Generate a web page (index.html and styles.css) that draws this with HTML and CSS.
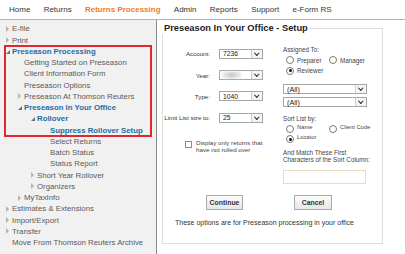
FILE: index.html
```html
<!DOCTYPE html>
<html lang="en">
<head>
    <meta charset="UTF-8">
    <title>Preseason In Your Office - Setup</title>
    <link rel="stylesheet" href="styles.css">
</head>
<body>
    <div class="topnav">
        <a>Home</a>
        <a>Returns</a>
        <a class="active">Returns Processing</a>
        <a>Admin</a>
        <a>Reports</a>
        <a>Support</a>
        <a>e-Form RS</a>
    </div>
    <div class="page">
        <div class="sidebar">
            <div class="item lvl0"><span class="arr"></span>E-file</div>
            <div class="item lvl0"><span class="arr"></span>Print</div>
            <div class="highlight">
                <div class="item lvl0 sel"><span class="arr open"></span>Preseason Processing</div>
                <div class="item lvl1">Getting Started on Preseason</div>
                <div class="item lvl1">Client Information Form</div>
                <div class="item lvl1">Preseason Options</div>
                <div class="item lvl1"><span class="arr"></span>Preseason At Thomson Reuters</div>
                <div class="item lvl1 sel"><span class="arr open"></span>Preseason In Your Office</div>
                <div class="item lvl2 sel"><span class="arr open"></span>Rollover</div>
                <div class="item lvl3 sel">Suppress Rollover Setup</div>
            </div>
            <div class="item lvl3">Select Returns</div>
            <div class="item lvl3">Batch Status</div>
            <div class="item lvl3">Status Report</div>
            <div class="item lvl2"><span class="arr"></span>Short Year Rollover</div>
            <div class="item lvl2"><span class="arr"></span>Organizers</div>
            <div class="item lvl1"><span class="arr"></span>MyTaxInfo</div>
            <div class="item lvl0"><span class="arr"></span>Estimates &amp; Extensions</div>
            <div class="item lvl0"><span class="arr"></span>Import/Export</div>
            <div class="item lvl0"><span class="arr"></span>Transfer</div>
            <div class="item lvl0">Move From Thomson Reuters Archive</div>
        </div>
        <div class="main">
            <fieldset class="panel">
                <legend>Preseason In Your Office - Setup</legend>
                <div class="cols">
                    <div class="left">
                        <div class="row"><label>Account:</label><div class="select"><span>7236</span><i></i></div></div>
                        <div class="row"><label>Year:</label><div class="select"><span class="blur"></span><i></i></div></div>
                        <div class="row"><label>Type:</label><div class="select"><span>1040</span><i></i></div></div>
                        <div class="row"><label>Limit List size to:</label><div class="select"><span>25</span><i></i></div></div>
                        <div class="check"><span class="box"></span><span>Display only returns that<br>have not rolled over</span></div>
                    </div>
                    <div class="right">
                        <div class="cap">Assigned To:</div>
                        <div class="radios">
                            <span class="radio"><b></b>Preparer</span>
                            <span class="radio"><b></b>Manager</span>
                        </div>
                        <div class="radios"><span class="radio on"><b></b>Reviewer</span></div>
                        <div class="select wide first"><span>(All)</span><i></i></div>
                        <div class="select wide"><span>(All)</span><i></i></div>
                        <div class="cap sort">Sort List by:</div>
                        <div class="radios small">
                            <span class="radio"><b></b>Name</span>
                            <span class="radio"><b></b>Client Code</span>
                        </div>
                        <div class="radios small"><span class="radio on"><b></b>Locator</span></div>
                        <div class="match">And Match These First<br>Characters of the Sort Column:</div>
                        <div class="textbox"></div>
                    </div>
                </div>
                <div class="buttons">
                    <button>Continue</button>
                    <button>Cancel</button>
                </div>
                <p class="note">These options are for Preseason processing in your office</p>
            </fieldset>
        </div>
    </div>
</body>
</html>
```

FILE: styles.css
```css
body {
    margin: 0;
    font-family: "Liberation Sans", Arial, sans-serif;
    color: #333;
    background: #fff;
    width: 405px;
    height: 254px;
    overflow: hidden;
}

/* top menu */
.topnav {
    height: 20px;
    display: flex;
    align-items: center;
    padding: 0 0 1px 9px;
    gap: 13.3px;
    font-size: 8px;
    color: #333;
    white-space: nowrap;
    border-bottom: 1px solid #b4b4b4;
    box-sizing: border-box;
}
.topnav .active {
    color: #f47b20;
    font-weight: bold;
}

.page {
    display: flex;
    height: 234px;
}

/* left tree */
.sidebar {
    width: 156px;
    flex-shrink: 0;
    background: #f1f1f1;
    border-right: 1px solid #8a8a8a;
    padding-top: 3.4px;
    font-size: 7.8px;
    color: #5a5a5a;
}
.item {
    height: 11.25px;
    line-height: 11.25px;
    white-space: nowrap;
    position: relative;
}
.lvl0 { padding-left: 12px; }
.lvl1 { padding-left: 24px; }
.lvl2 { padding-left: 37px; }
.lvl3 { padding-left: 50px; }
.sel {
    color: #1e6ea4;
    font-weight: bold;
}
.arr {
    position: absolute;
    width: 0;
    height: 0;
    margin-left: -6px;
    top: 2.6px;
    border-top: 3px solid transparent;
    border-bottom: 3px solid transparent;
    border-left: 3px solid #b4b4b4;
}
.arr.open {
    margin-left: -6px;
    top: 4px;
    border-top: 0;
    border-left: 4px solid transparent;
    border-bottom: 4px solid #707070;
}
.highlight {
    margin: 0 5px;
    outline: 2px solid #e3262f;
    outline-offset: -1px;
}
.highlight .lvl0 { padding-left: 7px; }
.highlight .lvl1 { padding-left: 19px; }
.highlight .lvl2 { padding-left: 32px; }
.highlight .lvl3 { padding-left: 45px; }

/* setup panel */
.main {
    flex: 1;
    padding: 2.5px 0 0 5px;
}
.panel {
    width: 221px;
    height: 221px;
    margin: 0;
    padding: 0;
    border: 1px solid #dedede;
    box-sizing: border-box;
    min-width: 0;
}
legend {
    padding: 0 1px 0 2px;
    margin-left: -1px;
    font-size: 9.3px;
    line-height: 11px;
    font-weight: bold;
    color: #222;
}

.cols {
    display: flex;
}
.left {
    width: 120px;
    padding-top: 9.5px;
}
.row {
    display: flex;
    align-items: center;
    height: 21.4px;
    font-size: 6.2px;
}
.row label {
    width: 47px;
    text-align: right;
    margin-right: 9px;
}
.select {
    width: 44px;
    height: 10px;
    border: 1px solid #a6a6a6;
    box-sizing: border-box;
    display: flex;
    align-items: center;
    background: #fff;
    font-size: 6.8px;
    color: #222;
}
.select span {
    flex: 1;
    padding-left: 3px;
}
.select .blur {
    height: 6px;
    margin: 0 10px 0 2px;
    background: linear-gradient(90deg, #eee, #c9c9c9 50%, #eee);
    filter: blur(1px);
}
.select i {
    width: 10px;
    height: 8px;
    margin-right: 0;
    border-left: 1px solid #cfcfcf;
    background: #f4f4f4;
    position: relative;
}
.select i::after {
    content: "";
    position: absolute;
    left: 3px;
    top: 1px;
    width: 2.5px;
    height: 2.5px;
    border-right: 1.3px solid #222;
    border-bottom: 1.3px solid #222;
    transform: rotate(45deg);
}
.check {
    display: flex;
    gap: 4px;
    padding: 10px 0 0 22px;
    font-size: 6.2px;
    line-height: 7.5px;
    color: #444;
}
.check .box {
    width: 5px;
    height: 5px;
    border: 1px solid #8c8c8c;
    margin-top: 2px;
    flex-shrink: 0;
}

.right {
    padding-top: 11.5px;
    font-size: 6.3px;
    color: #444;
}
.cap {
    height: 10px;
    line-height: 10px;
}
.radios {
    display: flex;
    height: 10.5px;
    align-items: center;
    padding-left: 3px;
}
.radio {
    display: flex;
    align-items: center;
    gap: 3px;
    width: 43px;
}
.radio b {
    width: 6px;
    height: 6px;
    border: 1px solid #7a7a7a;
    border-radius: 50%;
    position: relative;
    background: #fff;
}
.radio.on b::after {
    content: "";
    position: absolute;
    left: 1.5px;
    top: 1.5px;
    width: 3px;
    height: 3px;
    border-radius: 50%;
    background: #111;
}
.radios.small {
    height: 10px;
    font-size: 5.8px;
}
.radios.small .radio {
    align-items: flex-start;
}
.radios.small .radio b {
    margin-top: 1px;
}
.select.wide {
    width: 84px;
    font-size: 7.2px;
    margin-top: 3px;
}
.select.wide.first {
    margin-top: 8px;
}
.sort {
    margin-top: 6.5px;
}
.match {
    margin-top: 6.5px;
    line-height: 6.8px;
}
.textbox {
    width: 83px;
    height: 14px;
    border: 1px solid #e6dcc2;
    box-sizing: border-box;
    margin-top: 6.5px;
    background: #fff;
}

.buttons {
    display: flex;
    gap: 51px;
    padding-left: 43px;
    margin-top: 11px;
}
button {
    font-family: "Liberation Sans", Arial, sans-serif;
    font-size: 6.9px;
    font-weight: bold;
    color: #333;
    width: 37px;
    height: 15px;
    border: 1px solid #a8a8a8;
    background: linear-gradient(#fbfbfb, #e8e8e8);
    padding: 0;
}
button + button {
    width: 38px;
}
.note {
    margin: 8.5px 0 0 12px;
    font-size: 7px;
    line-height: 8px;
    color: #333;
}
```
